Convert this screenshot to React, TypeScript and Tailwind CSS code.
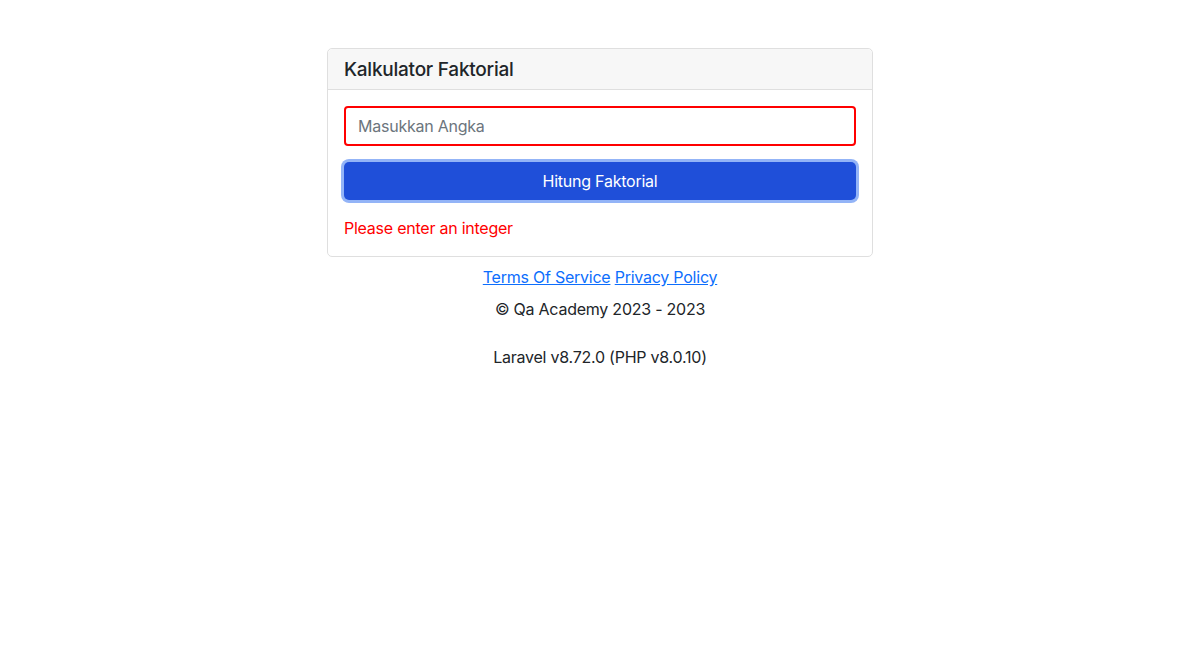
import { useState } from "react";

export default function App() {
  const [value, setValue] = useState("");

  return (
    <div className="min-h-screen bg-white pt-12 text-[#212529] tracking-[-0.015em]" style={{ fontFamily: "Inter, 'Noto Sans', sans-serif" }}>
      <div className="mx-auto w-[546px] rounded-[5px] border border-[#dfdfdf]">
        <div className="h-[41px] border-b border-[#dfdfdf] bg-[#f7f7f7] px-4 flex items-center rounded-t-[5px]">
          <h1 className="text-[19px] font-medium leading-none">Kalkulator Faktorial</h1>
        </div>
        <div className="p-4">
          <input
            type="text"
            placeholder="Masukkan Angka"
            value={value}
            onChange={(e) => setValue(e.target.value)}
            className="block w-full h-10 rounded-[4px] border-2 border-[#ff0000] px-3 text-base outline-none placeholder:text-[#6c757d]"
          />
          <button
            type="button"
            className="mt-4 block w-full h-[38px] rounded-[5px] bg-[#1f4fd9] text-white text-base ring-[3px] ring-[#93b4f7]"
          >
            Hitung Faktorial
          </button>
          <p className="mt-4 text-base text-[#ff0000]">Please enter an integer</p>
        </div>
      </div>
      <div className="text-center text-base mt-[8px]">
        <a href="#" className="text-[#0d6efd] underline">Terms Of Service</a>{" "}
        <a href="#" className="text-[#0d6efd] underline">Privacy Policy</a>
        <p className="mt-2">© Qa Academy 2023 - 2023</p>
        <p className="mt-6">Laravel v8.72.0 (PHP v8.0.10)</p>
      </div>
    </div>
  );
}
